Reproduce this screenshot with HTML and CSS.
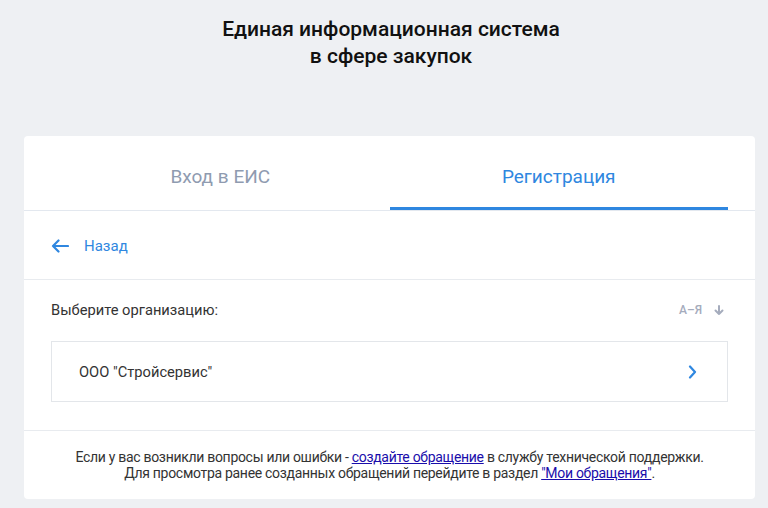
FILE: index.html
```html
<!DOCTYPE html>
<html lang="ru">
<head>
    <meta charset="UTF-8">
    <meta name="viewport" content="width=device-width, initial-scale=1.0">
    <title>ЕИС - Регистрация</title>
    <link rel="stylesheet" href="styles.css">
</head>
<body>
    <h1 class="title">Единая информационная система<br>в сфере закупок</h1>

    <div class="card">
        <div class="tabs">
            <a class="tab" href="#">Вход в ЕИС</a>
            <a class="tab active" href="#">Регистрация</a>
        </div>

        <div class="back-row">
            <a class="back" href="#">
                <svg width="18" height="14" viewBox="0 0 18 14">
                    <path d="M17 7H2M7.5 1.5L2 7l5.5 5.5" fill="none" stroke="#2f87e0" stroke-width="2.2" stroke-linecap="round" stroke-linejoin="round"/>
                </svg>
                <span>Назад</span>
            </a>
        </div>

        <div class="orgs">
            <div class="orgs-head">
                <span>Выберите организацию:</span>
                <span class="sort">А–Я
                    <svg width="10" height="11" viewBox="0 0 10 11">
                        <path d="M5 1v8M1.5 5.5L5 9l3.5-3.5" fill="none" stroke="#a5acbd" stroke-width="2" stroke-linecap="round" stroke-linejoin="round"/>
                    </svg>
                </span>
            </div>
            <a class="org" href="#">
                <span>ООО "Стройсервис"</span>
                <svg width="9" height="14" viewBox="0 0 9 14">
                    <path d="M2 1.5L7 7l-5 5.5" fill="none" stroke="#2f87e0" stroke-width="2.2" stroke-linecap="round" stroke-linejoin="round"/>
                </svg>
            </a>
        </div>

        <div class="help">
            Если у вас возникли вопросы или ошибки - <a href="#">создайте обращение</a> в службу технической поддержки.<br>
            Для просмотра ранее созданных обращений перейдите в раздел <a href="#">"Мои обращения"</a>.
        </div>
    </div>
</body>
</html>
```

FILE: styles.css
```css
body {
    font-family: Roboto, "Liberation Sans", sans-serif;
    background: #eef0f3;
    margin: 0;
    padding: 16px 13px 0 24px;
    color: #333;
}
.title {
    margin: 0 0 66px;
    text-align: center;
    font-size: 21px;
    font-weight: 500;
    line-height: 27px;
    color: #111;
    padding-left: 3px;
}
.card {
    background: white;
    border-radius: 4px;
}
.tabs {
    display: flex;
    padding: 0 27px;
    border-bottom: 1px solid #e3e8ef;
}
.tab {
    flex: 1;
    text-align: center;
    font-size: 19px;
    line-height: 24px;
    padding: 29px 0 18px;
    color: #8f9bb0;
    text-decoration: none;
    border-bottom: 3px solid transparent;
}
.tab.active {
    color: #2f87e0;
    border-bottom-color: #2f87e0;
}
.back-row {
    padding: 26px 27px 22px;
    border-bottom: 1px solid #e8ebef;
}
.back {
    display: inline-flex;
    align-items: center;
    gap: 15px;
    color: #2f87e0;
    text-decoration: none;
    font-size: 15px;
    line-height: 18px;
}
.orgs {
    padding: 20px 27px 28px;
    border-bottom: 1px solid #e8ebef;
}
.orgs-head {
    display: flex;
    justify-content: space-between;
    align-items: center;
    font-size: 14.7px;
    line-height: 20px;
    color: #333;
    margin-bottom: 21px;
}
.sort {
    display: flex;
    align-items: center;
    gap: 12px;
    font-size: 12px;
    font-weight: 500;
    color: #a5acbd;
    padding-right: 4px;
}
.org {
    display: flex;
    justify-content: space-between;
    align-items: center;
    border: 1px solid #e3e6ea;
    padding: 20px 30px 19px 27px;
    color: #333;
    text-decoration: none;
    font-size: 14.7px;
    line-height: 20px;
}
.help {
    text-align: center;
    font-size: 14px;
    line-height: 16px;
    letter-spacing: -0.3px;
    padding: 18px 0 18px;
    color: #333;
}
.help a {
    color: #1a0dab;
}
```
